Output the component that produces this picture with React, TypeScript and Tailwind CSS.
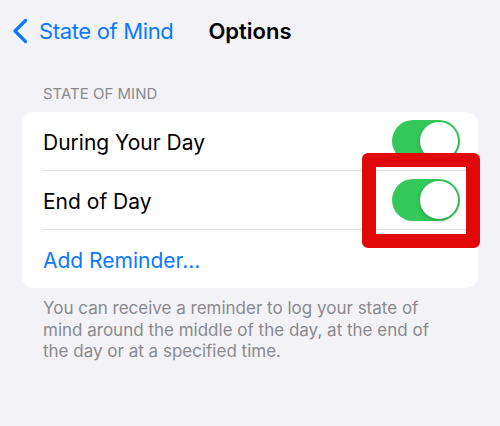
import React from "react";

function Toggle() {
  return (
    <div className="relative w-[68px] h-[42px] rounded-full bg-[#34c759] shrink-0">
      <div className="absolute right-[2px] top-[2px] w-[38px] h-[38px] rounded-full bg-white shadow-[0_2px_5px_rgba(0,0,0,0.18)]" />
    </div>
  );
}

export default function App() {
  return (
    <div className="relative w-[500px] h-[426px] bg-[#f2f2f7] overflow-hidden font-['Inter','Liberation_Sans',sans-serif]">
      <div className="flex items-center h-[62px] pl-[12px]">
        <svg width="16" height="26" viewBox="0 0 16 26" className="shrink-0">
          <path d="M13.5 2.5 L3 13 L13.5 23.5" fill="none" stroke="#0a7aff" strokeWidth="3.2" strokeLinecap="round" strokeLinejoin="round" />
        </svg>
        <span className="ml-[11px] text-[22px] leading-none text-[#0a7aff] tracking-[-0.35px]">State of Mind</span>
        <span className="ml-[35px] text-[22px] leading-none font-semibold text-black">Options</span>
      </div>
      <div className="pl-[43px] pt-[23px] pb-[10px] text-[15px] leading-[17px] text-[#8a8a8e] uppercase">State of Mind</div>
      <div className="mx-[22px] rounded-[12px] bg-white">
        <div className="flex items-center h-[58px] pl-[21px] pr-[18px]">
          <span className="flex-1 pt-[3px] text-[21px] text-black">During Your Day</span>
          <Toggle />
        </div>
        <div className="ml-[21px] h-px bg-[#dcdce0]" />
        <div className="flex items-center h-[58px] pl-[21px] pr-[18px]">
          <span className="flex-1 pt-[3px] text-[21px] text-black">End of Day</span>
          <Toggle />
        </div>
        <div className="ml-[21px] h-px bg-[#dcdce0]" />
        <div className="flex items-center h-[58px] pl-[21px] pr-[18px]">
          <span className="flex-1 pt-[3px] text-[21px] text-[#0a7aff]">Add Reminder...</span>
        </div>
      </div>
      <p className="pl-[43px] pr-[55px] pt-[10px] text-[17px] leading-[21.5px] text-[#8a8a8e]">
        You can receive a reminder to log your state of mind around the middle of the day, at the end of the day or at a specified time.
      </p>
      <div className="absolute left-[362px] top-[153px] w-[118px] h-[95px] border-[14px] border-[#e00808] rounded-[6px]" />
    </div>
  );
}
